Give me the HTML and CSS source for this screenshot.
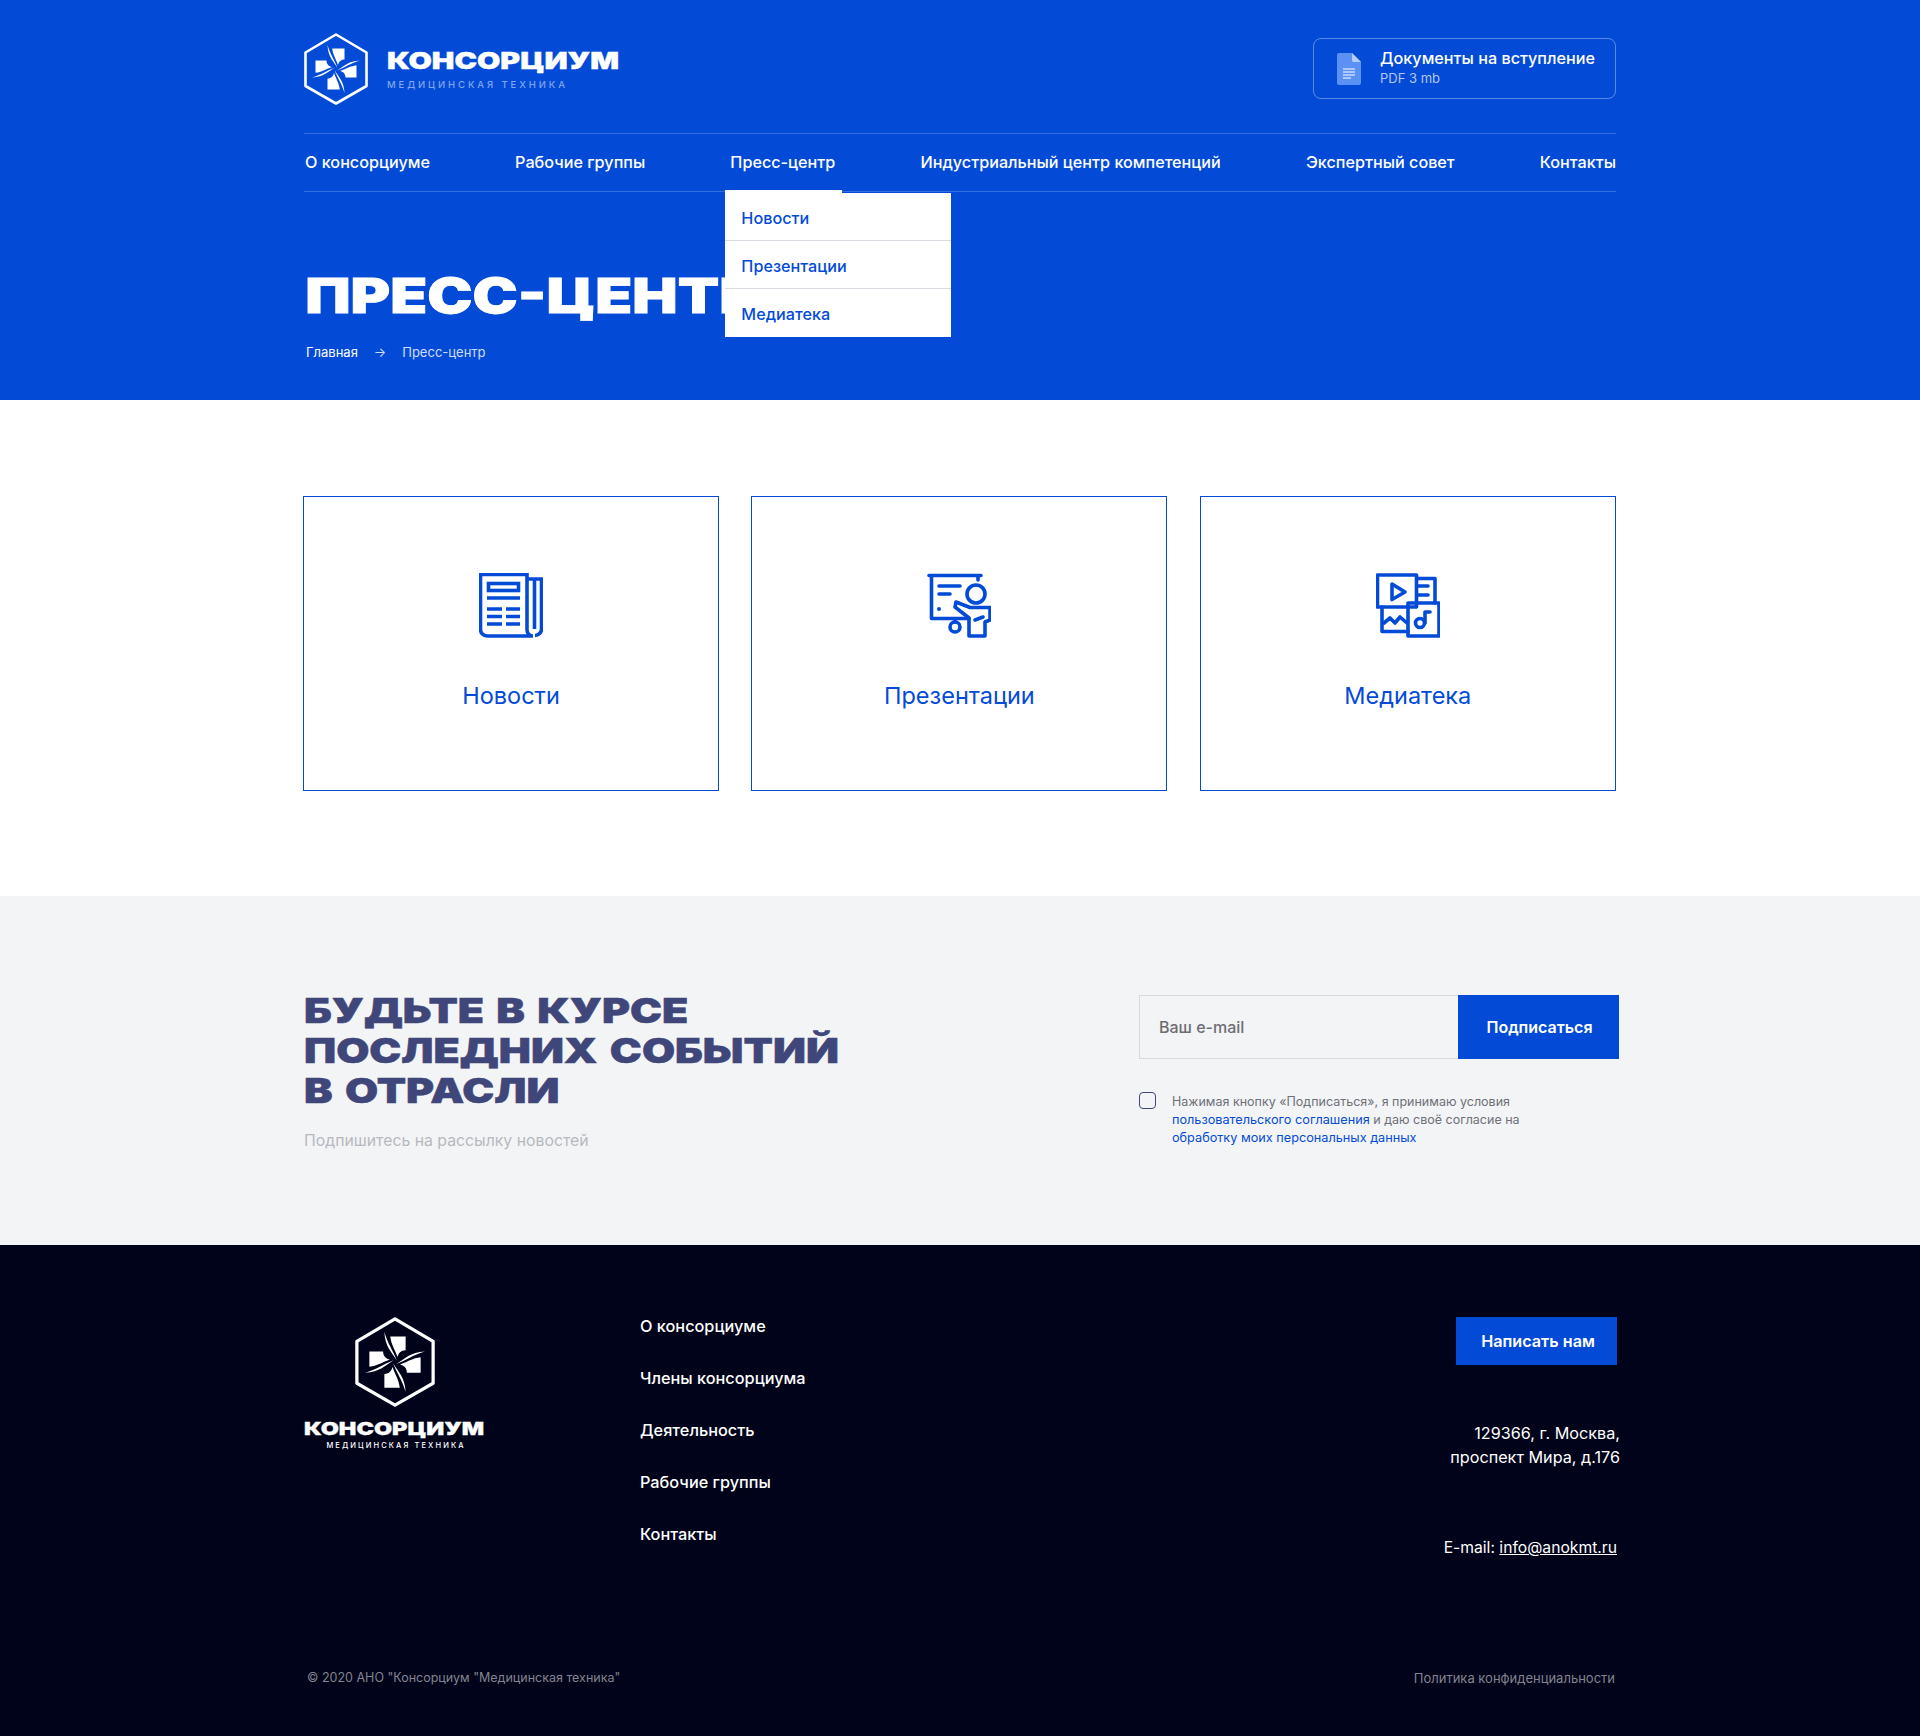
FILE: index.html
```html
<!DOCTYPE html>
<html lang="ru">
    <head>
        <title>Пресс-центр</title>
        <meta charset="UTF-8">
        <link rel="stylesheet" href="styles.css">
    </head>
    <body>
        <svg class="defs" width="0" height="0">
            <g id="blade" fill="currentColor">
                <path d="M-8.5-24C-6-15-1.5-9 1.5-1-2.500-8-8-12-8.5-24Z"/>
                <path d="M-3.8-20.500H8.500V-9.500C4.500-9.500 2.800-7 2-4-.5-11-3-14-3.800-20.500Z"/>
            </g>
            <symbol id="mark" viewBox="3 2 64 72">
                <path d="M35 3.5 65.5 21.500V55L35 72.5 4.500 55V21.500Z" fill="none" stroke="currentColor" stroke-width="2.6" stroke-linejoin="round"/>
                <use href="#blade" transform="translate(35 38)"/>
                <use href="#blade" transform="translate(35 38) rotate(90)"/>
                <use href="#blade" transform="translate(35 38) rotate(180)"/>
                <use href="#blade" transform="translate(35 38) rotate(270)"/>
            </symbol>
        </svg>

        <div class="hero">
            <div class="wrap">
                <div class="top">
                    <a class="logo" href="#">
                        <svg class="logo-mark"><use href="#mark"/></svg>
                        <span class="logo-text">
                            <span class="logo-name">КОНСОРЦИУМ</span>
                            <span class="logo-sub">МЕДИЦИНСКАЯ ТЕХНИКА</span>
                        </span>
                    </a>
                    <a class="docs" href="#">
                        <svg class="docs-icon" viewBox="0 0 24 32">
                            <path d="M2 0H15L24 9V30a2 2 0 0 1-2 2H2a2 2 0 0 1-2-2V2a2 2 0 0 1 2-2Z" fill="#5b91f5"/>
                            <path d="M15 0 24 9H17a2 2 0 0 1-2-2Z" fill="#b5cdfb"/>
                            <path d="M6 16H18M6 19H18M6 22H18M6 25H14" stroke="#fff" stroke-width="1"/>
                        </svg>
                        <span class="docs-text">
                            <span class="docs-title">Документы на вступление</span>
                            <span class="docs-size">PDF 3 mb</span>
                        </span>
                    </a>
                </div>
                <ul class="nav">
                    <li><a href="#">О консорциуме</a></li>
                    <li><a href="#">Рабочие группы</a></li>
                    <li class="active">
                        <a href="#">Пресс-центр</a>
                        <ul class="drop">
                            <li><a href="#">Новости</a></li>
                            <li><a href="#">Презентации</a></li>
                            <li><a href="#">Медиатека</a></li>
                        </ul>
                    </li>
                    <li><a href="#">Индустриальный центр компетенций</a></li>
                    <li><a href="#">Экспертный совет</a></li>
                    <li><a href="#">Контакты</a></li>
                </ul>
                <h1 class="wide title">ПРЕСС-ЦЕНТР</h1>
                <div class="crumbs">
                    <a href="#">Главная</a>
                    <span class="crumb-arrow">→</span>
                    <span class="crumb-now">Пресс-центр</span>
                </div>
            </div>
        </div>

        <div class="sections">
            <div class="wrap">
                <div class="cards">
                    <a class="card" href="#">
                        <svg class="card-icon" viewBox="19 13 64 66">
                            <g fill="none" stroke="#034bd7" stroke-width="3.6">
                                <path d="M20.5 14.500H67V70a6 6 0 0 0 6 6H27a6.500 6.500 0 0 1-6.500-6.500Z"/>
                                <path d="M67 19H81.500V69a6.500 6.500 0 0 1-6.500 6.500"/>
                                <path d="M74.5 19V69"/>
                                <rect x="28.5" y="23.500" width="30" height="7"/>
                                <path d="M27 38H60M27 49H42M46 49H60M27 56.500H42M46 56.500H60M27 64H42M46 64H60"/>
                            </g>
                        </svg>
                        <span class="card-name">Новости</span>
                    </a>
                    <a class="card" href="#">
                        <svg class="card-icon" viewBox="17 13 64 66">
                            <g fill="none" stroke="#034bd7" stroke-width="3.6" stroke-linecap="round" stroke-linejoin="round">
                                <path d="M19 15.500H71M21.500 15.500V58.500H59M68 16V20"/>
                                <path d="M29 26H50M29 34H40"/>
                                <circle cx="66" cy="34" r="9"/>
                                <path d="M46 42 60 47.500H80V60L75 62V76H59V58L45 47Z"/>
                                <path d="M65 60 73 57"/>
                                <path d="M45 59V62"/>
                                <circle cx="45" cy="67" r="5"/>
                            </g>
                            <circle cx="29" cy="49" r="2" fill="#034bd7"/>
                        </svg>
                        <span class="card-name">Презентации</span>
                    </a>
                    <a class="card" href="#">
                        <svg class="card-icon" viewBox="16 13 64 66">
                            <g fill="none" stroke="#034bd7" stroke-width="3.6" stroke-linecap="round" stroke-linejoin="round">
                                <rect x="17.5" y="15" width="39" height="32"/>
                                <path d="M32 24 45 32 32 39.500Z"/>
                                <path d="M57 18.500H75V43M58 26H68M58 35H68"/>
                                <path d="M22 47V71.500H48"/>
                                <path d="M24 63 30 58 35 63 40 57 47 63"/>
                                <rect x="48" y="43" width="31" height="33"/>
                                <circle cx="60" cy="63" r="4.500"/>
                                <path d="M65 63V52H70"/>
                            </g>
                        </svg>
                        <span class="card-name">Медиатека</span>
                    </a>
                </div>
            </div>
        </div>

        <div class="subscribe">
            <div class="wrap subscribe-in">
                <div>
                    <h2 class="wide sub-title">БУДЬТЕ В КУРСЕ<br>ПОСЛЕДНИХ СОБЫТИЙ<br>В ОТРАСЛИ</h2>
                    <p class="sub-note">Подпишитесь на рассылку новостей</p>
                </div>
                <form class="sub-form">
                    <div class="sub-row">
                        <input class="sub-input" type="text" placeholder="Ваш e-mail">
                        <button class="sub-btn" type="button">Подписаться</button>
                    </div>
                    <div class="agree">
                        <span class="check"></span>
                        <p>Нажимая кнопку «Подписаться», я принимаю условия<br><a href="#">пользовательского соглашения</a> и даю своё согласие на<br><a href="#">обработку моих персональных данных</a></p>
                    </div>
                </form>
            </div>
        </div>

        <div class="footer">
            <div class="wrap">
                <div class="foot-main">
                    <a class="foot-logo" href="#">
                        <svg class="foot-mark"><use href="#mark"/></svg>
                        <span class="foot-name">КОНСОРЦИУМ</span>
                        <span class="foot-sub">МЕДИЦИНСКАЯ ТЕХНИКА</span>
                    </a>
                    <ul class="foot-nav">
                        <li><a href="#">О консорциуме</a></li>
                        <li><a href="#">Члены консорциума</a></li>
                        <li><a href="#">Деятельность</a></li>
                        <li><a href="#">Рабочие группы</a></li>
                        <li><a href="#">Контакты</a></li>
                    </ul>
                    <div class="foot-right">
                        <a class="write-btn" href="#">Написать нам</a>
                        <p class="address">129366, г. Москва,<br>проспект Мира, д.176</p>
                        <p class="mail">E-mail: <a href="#">info@anokmt.ru</a></p>
                    </div>
                </div>
                <div class="foot-bottom">
                    <span class="copy">© 2020 АНО "Консорциум "Медицинская техника"</span>
                    <a href="#">Политика конфиденциальности</a>
                </div>
            </div>
        </div>
    </body>
</html>
```

FILE: styles.css
```css
*{
    box-sizing: border-box;
}
body{
    margin: 0;
    font-family: "Inter", "Noto Sans", sans-serif;
    color: #000319;
    background: #fff;
}
a{
    color: inherit;
    text-decoration: none;
}
ul{
    margin: 0;
    padding: 0;
    list-style: none;
}
.defs{
    display: block;
    height: 0;
}
.wrap{
    width: 1312px;
    margin: 0 auto;
}
.wide{
    margin: 0;
    font-weight: 900;
    transform-origin: left top;
    white-space: nowrap;
}

/* top */
.hero{
    height: 400px;
    background: #034bd7;
    color: #fff;
}
.top{
    display: flex;
    justify-content: space-between;
    height: 134px;
    padding-top: 38px;
    border-bottom: 1px solid rgba(255,255,255,.2);
}
.logo{
    display: flex;
    height: 72px;
    margin-top: -5px;
}
.logo-mark{
    width: 64px;
    height: 72px;
    color: #fff;
}
.logo-text{
    display: block;
    margin-left: 19px;
    padding-top: 14px;
}
.logo-name{
    display: block;
    font-size: 23px;
    line-height: 28px;
    font-weight: 900;
    -webkit-text-stroke: .4px #fff;
    transform: scaleX(1.31);
    transform-origin: left top;
}
.logo-sub{
    display: block;
    margin-top: 4px;
    font-size: 9.5px;
    line-height: 12px;
    font-weight: 500;
    letter-spacing: 2.9px;
    color: rgba(255,255,255,.5);
}
.docs{
    display: flex;
    align-items: center;
    width: 303px;
    height: 61px;
    padding-left: 23px;
    border: 1px solid rgba(255,255,255,.35);
    border-radius: 8px;
}
.docs-icon{
    width: 24px;
    height: 32px;
    margin-right: 19px;
}
.docs-text{
    margin-top: -3px;
}
.docs-title{
    display: block;
    font-size: 16.2px;
    line-height: 20px;
    font-weight: 500;
}
.docs-size{
    display: block;
    margin-top: 2px;
    font-size: 13px;
    line-height: 16px;
    color: rgba(255,255,255,.7);
}
.nav{
    display: flex;
    justify-content: space-between;
    height: 58px;
    padding-left: 1px;
    border-bottom: 1px solid rgba(255,255,255,.2);
    font-size: 16.2px;
    font-weight: 500;
    line-height: 57px;
}
.nav > li{
    position: relative;
}
.active::after{
    content: "";
    position: absolute;
    left: -5px;
    top: 56px;
    width: 117px;
    height: 3px;
    background: #fff;
}
.drop{
    position: absolute;
    left: -5px;
    top: 59px;
    z-index: 2;
    width: 226px;
    height: 144px;
    background: #fff;
    color: #034bd7;
    line-height: 50px;
}
.drop li{
    height: 48px;
    padding-left: 16px;
    border-bottom: 1px solid #d9dbe3;
}
.drop li:last-child{
    border-bottom: 0;
}
.title{
    margin-top: 75px;
    padding-left: 1px;
    font-size: 48px;
    line-height: 58px;
    -webkit-text-stroke: .8px #fff;
    transform: scaleX(1.26);
}
.crumbs{
    display: flex;
    margin-top: 18px;
    padding-left: 2px;
    font-size: 13px;
    line-height: 18px;
}
.crumb-arrow{
    margin: 0 16px 0 16px;
    opacity: .8;
}
.crumb-now{
    opacity: .8;
}

/* cards */
.sections{
    height: 496px;
    padding-top: 96px;
}
.cards{
    display: grid;
    grid-template-columns: 416px 416px 416px;
    column-gap: 32.4px;
    width: 1313px;
    margin-left: -1px;
}
.card{
    display: flex;
    flex-direction: column;
    align-items: center;
    height: 295px;
    padding-top: 76px;
    border: 1px solid #034bd7;
    color: #034bd7;
}
.card-icon{
    width: 64px;
    height: 66px;
}
.card-name{
    margin-top: 42px;
    font-size: 23.5px;
    line-height: 30px;
}

/* subscribe */
.subscribe{
    height: 349px;
    padding-top: 95px;
    background: #f3f4f6;
}
.subscribe-in{
    display: flex;
    justify-content: space-between;
}
.sub-title{
    font-size: 34px;
    line-height: 40px;
    color: #3f4679;
    -webkit-text-stroke: .5px #3f4679;
    word-spacing: 3px;
    transform: scaleX(1.26);
}
.sub-note{
    margin: 18px 0 0;
    font-size: 15.8px;
    line-height: 24px;
    color: #b7b9bf;
}
.sub-form{
    width: 480px;
    margin: 4px -3px 0 0;
}
.sub-row{
    display: flex;
    height: 64px;
}
.sub-input{
    width: 319px;
    height: 64px;
    padding: 0 19px;
    border: 1px solid #d8dae2;
    border-right: 0;
    background: transparent;
    font-family: inherit;
    font-size: 16px;
    font-weight: 500;
}
.sub-input::placeholder{
    color: #6d6e73;
    opacity: 1;
}
.sub-btn{
    width: 161px;
    padding: 0 0 0 2px;
    border: 0;
    background: #034bd7;
    color: #fff;
    font-family: inherit;
    font-size: 16px;
    font-weight: 600;
}
.agree{
    display: flex;
    margin-top: 33px;
}
.check{
    flex: none;
    width: 17px;
    height: 17px;
    margin-right: 16px;
    border: 1px solid #3f4679;
    border-radius: 4px;
}
.agree p{
    margin: 1px 0 0;
    font-size: 12.5px;
    line-height: 18px;
    color: #6f7077;
    white-space: nowrap;
}
.agree a{
    font-size: 12.7px;
    color: #034bd7;
}

/* footer */
.footer{
    height: 491px;
    padding-top: 72px;
    background: #000319;
    color: #fff;
}
.foot-main{
    display: flex;
    height: 317px;
}
.foot-logo{
    display: flex;
    flex-direction: column;
    align-items: center;
    width: 182px;
    margin-right: 154px;
}
.foot-mark{
    width: 80px;
    height: 90px;
    margin-bottom: 11px;
}
.foot-name{
    align-self: flex-start;
    font-size: 18px;
    line-height: 22px;
    font-weight: 900;
    white-space: nowrap;
    -webkit-text-stroke: .3px #fff;
    transform: scaleX(1.3);
    transform-origin: left top;
}
.foot-sub{
    margin-top: 1px;
    padding-left: 2px;
    font-size: 7.5px;
    line-height: 10px;
    font-weight: 500;
    letter-spacing: 2.1px;
    white-space: nowrap;
}
.foot-nav{
    flex: 1;
    margin-top: -1px;
    font-size: 16.3px;
    font-weight: 500;
}
.foot-nav li{
    height: 52px;
    line-height: 20px;
}
.foot-right{
    display: flex;
    flex-direction: column;
    align-items: flex-end;
    margin-right: -1px;
    font-size: 16px;
    line-height: 24px;
}
.write-btn{
    width: 161px;
    height: 48px;
    padding-left: 3px;
    background: #034bd7;
    text-align: center;
    line-height: 48px;
    font-size: 16.2px;
    font-weight: 600;
}
.address{
    margin: 56px -3px 0 0;
    font-size: 16.2px;
    text-align: right;
}
.mail{
    margin: 67px 0 0;
    font-size: 15.7px;
}
.mail a{
    text-decoration: underline;
}
.foot-bottom{
    display: flex;
    justify-content: space-between;
    align-items: center;
    padding: 35px 1px 0 3px;
    font-size: 13px;
    line-height: 18px;
    color: #83848f;
}
.copy{
    font-size: 12.5px;
}
```
